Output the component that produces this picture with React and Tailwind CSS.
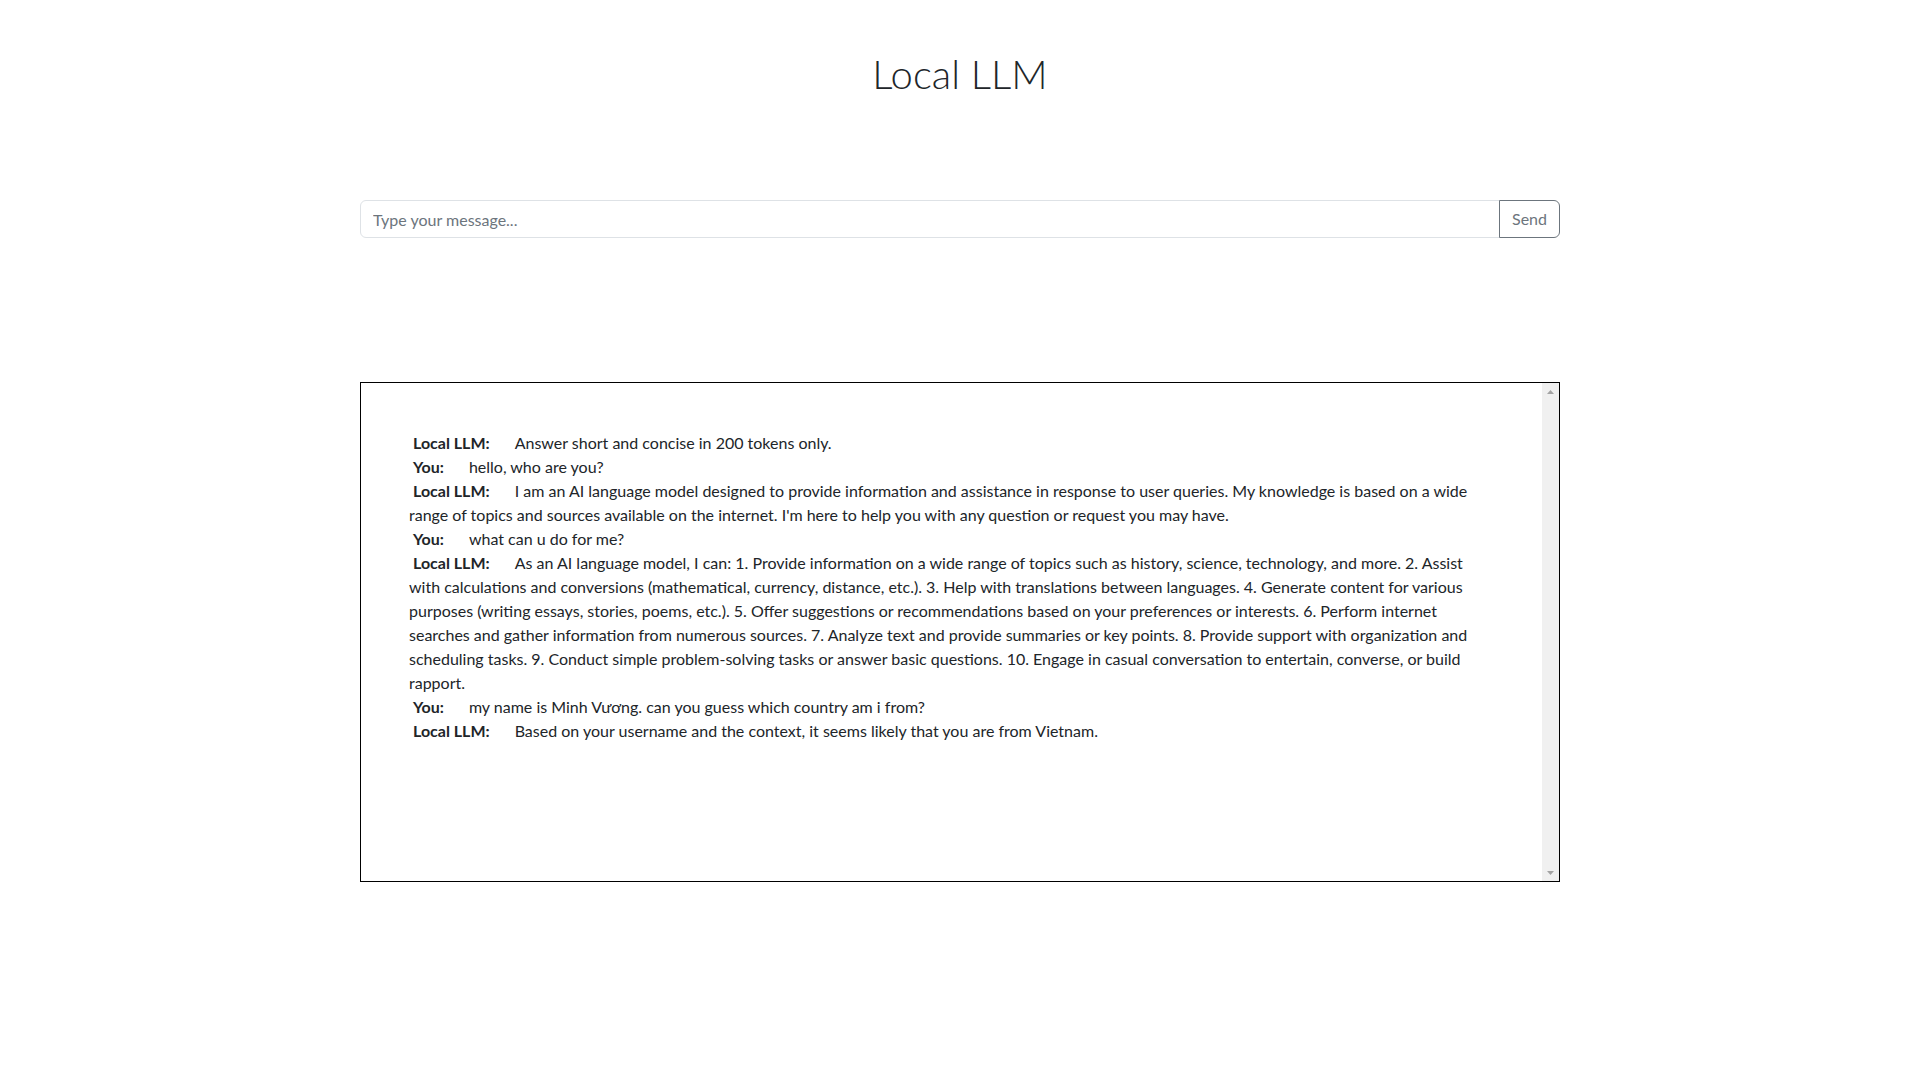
import React, { useState } from 'react';

const messages = [
  { who: 'Local LLM', text: 'Answer short and concise in 200 tokens only.' },
  { who: 'You', text: 'hello, who are you?' },
  {
    who: 'Local LLM',
    text: "I am an AI language model designed to provide information and assistance in response to user queries. My knowledge is based on a wide range of topics and sources available on the internet. I'm here to help you with any question or request you may have.",
  },
  { who: 'You', text: 'what can u do for me?' },
  {
    who: 'Local LLM',
    text: 'As an AI language model, I can: 1. Provide information on a wide range of topics such as history, science, technology, and more. 2. Assist with calculations and conversions (mathematical, currency, distance, etc.). 3. Help with translations between languages. 4. Generate content for various purposes (writing essays, stories, poems, etc.). 5. Offer suggestions or recommendations based on your preferences or interests. 6. Perform internet searches and gather information from numerous sources. 7. Analyze text and provide summaries or key points. 8. Provide support with organization and scheduling tasks. 9. Conduct simple problem-solving tasks or answer basic questions. 10. Engage in casual conversation to entertain, converse, or build rapport.',
  },
  { who: 'You', text: 'my name is Minh Vương. can you guess which country am i from?' },
  { who: 'Local LLM', text: 'Based on your username and the context, it seems likely that you are from Vietnam.' },
];

const App = () => {
  const [message, setMessage] = useState('');

  return (
    <div className="min-h-screen bg-white font-['Lato','Noto_Sans',sans-serif] text-[#212529]">
      <div className="mx-auto w-[1200px]">
        <h1 className="pt-[50px] text-center text-[40px] font-light leading-[48px]">Local LLM</h1>

        {/* Input */}
        <form className="mt-[102px] flex" onSubmit={(e) => e.preventDefault()}>
          <input
            value={message}
            onChange={(e) => setMessage(e.target.value)}
            placeholder="Type your message..."
            className="h-[38px] flex-1 rounded-l-[6px] border border-[#dee2e6] px-3 text-base outline-none placeholder:text-[#6c757d]"
          />
          <button
            type="submit"
            className="-ml-px h-[38px] w-[61px] rounded-r-[6px] border border-[#6c757d] text-base text-[#6c757d]"
          >
            Send
          </button>
        </form>

        {/* Chat log */}
        <div className="mt-[144px] flex h-[500px] border border-black">
          <div className="flex-1 p-12 text-base leading-6">
            {messages.map((m, i) => (
              <div key={i}>
                <span className="ml-1 mr-[25px] font-bold">{m.who}:</span>
                {m.text}
              </div>
            ))}
          </div>
          <div className="flex w-[17px] flex-col justify-between bg-[#f0f0f0]">
            <div className="flex h-[17px] items-center justify-center">
              <svg width="7" height="4" viewBox="0 0 7 4">
                <path d="M3.5 0 L7 4 L0 4 Z" fill="#a3a3a3" />
              </svg>
            </div>
            <div className="flex h-[17px] items-center justify-center">
              <svg width="7" height="4" viewBox="0 0 7 4">
                <path d="M0 0 L7 0 L3.5 4 Z" fill="#a3a3a3" />
              </svg>
            </div>
          </div>
        </div>
      </div>
    </div>
  );
};

export default App;
